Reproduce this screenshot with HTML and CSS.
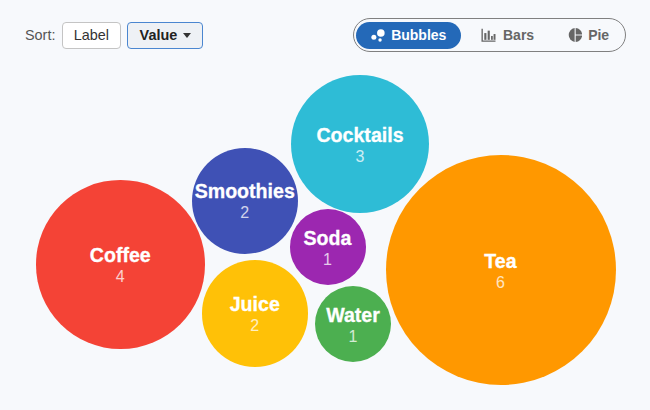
FILE: index.html
```html
<!DOCTYPE html>
<html lang="en">
<head>
<meta charset="utf-8">
<title>Drinks</title>
<link rel="stylesheet" href="styles.css">
</head>
<body>
<div class="toolbar">
  <div class="sort">
    <span class="sort-label">Sort:</span>
    <button class="btn btn-label">Label</button>
    <button class="btn btn-active">Value <span class="caret"></span></button>
  </div>
  <div class="views">
    <div class="view view-on">
      <svg class="icon" viewBox="0 0 14 14"><circle cx="2.6" cy="9.2" r="2.5"/><circle cx="9.6" cy="5" r="3.8"/><circle cx="8.8" cy="12" r="1.7"/></svg>
      Bubbles
    </div>
    <div class="view view-bars">
      <svg class="icon" viewBox="0 0 15 14"><path d="M0.5 0.5h1.4v12.2H15V14H0.5z"/><rect x="3.4" y="5" width="2.2" height="7"/><rect x="6.9" y="2.5" width="2.2" height="9.5"/><rect x="10.4" y="8" width="1.8" height="4"/><rect x="13" y="6" width="2" height="6"/></svg>
      Bars
    </div>
    <div class="view view-pie">
      <svg class="icon" viewBox="0 0 15 15"><path d="M6.8 0.1v14.8A7.5 7.5 0 0 1 6.8 .1z"/><path d="M8 .1A7.5 7.5 0 0 1 14.9 6.9H8z"/><path d="M8 8.1h6.9A7.5 7.5 0 0 1 8 14.9z"/></svg>
      Pie
    </div>
  </div>
</div>
<div class="chart">
  <div class="bubble coffee"><b>Coffee</b><span>4</span></div>
  <div class="bubble tea"><b>Tea</b><span>6</span></div>
  <div class="bubble cocktails"><b>Cocktails</b><span>3</span></div>
  <div class="bubble smoothies"><b>Smoothies</b><span>2</span></div>
  <div class="bubble juice"><b>Juice</b><span>2</span></div>
  <div class="bubble soda"><b>Soda</b><span>1</span></div>
  <div class="bubble water"><b>Water</b><span>1</span></div>
</div>
</body>
</html>
```
FILE: styles.css
```css
* { box-sizing: border-box; }
html, body { margin: 0; height: 100%; }
body {
  width: 650px;
  height: 410px;
  overflow: hidden;
  background: #f7f9fc;
  font-family: "Liberation Sans", Arial, sans-serif;
  position: relative;
}
.toolbar {
  display: flex;
  justify-content: space-between;
  align-items: center;
  padding: 18px 24px 0 25px;
}
.sort { display: flex; align-items: center; gap: 6.5px; }
.sort-label { font-size: 14.4px; color: #555; }
.btn {
  height: 27px;
  padding: 0;
  font: 14.4px "Liberation Sans", Arial, sans-serif;
  color: #333;
  background: #fff;
  border: 1px solid #c4c4c4;
  border-radius: 4px;
}
.btn-label { width: 59px; }
.btn-active {
  width: 76px;
  font-weight: bold;
  color: #222;
  background: #eef1f5;
  border-color: #4a86d0;
}
.caret {
  display: inline-block;
  width: 0;
  height: 0;
  margin-left: 2px;
  vertical-align: 2px;
  border-left: 4px solid transparent;
  border-right: 4px solid transparent;
  border-top: 5px solid #333;
}
.views {
  display: flex;
  align-items: center;
  width: 273px;
  height: 34px;
  padding: 2px;
  border: 1px solid #808080;
  border-radius: 17px;
}
.view {
  display: flex;
  align-items: center;
  justify-content: center;
  gap: 6px;
  height: 27px;
  padding: 0 10px;
  border-radius: 14px;
  font-size: 14px;
  font-weight: bold;
  color: #666;
}
.view-bars { margin-left: 10px; gap: 7.5px; }
.view-pie { margin-left: 13.5px; }
.view-on { width: 105px; background: #2469b8; color: #fff; }
.icon { width: 14.5px; height: 14px; fill: currentColor; }
.chart { position: absolute; inset: 0; }
.bubble {
  position: absolute;
  display: flex;
  flex-direction: column;
  align-items: center;
  justify-content: center;
  padding-top: 1px;
  border-radius: 50%;
  color: #fff;
  white-space: nowrap;
}
.bubble b { font-size: 19.6px; line-height: 23px; -webkit-text-stroke: 0.3px #fff; }
.bubble span { font-size: 16px; line-height: 19px; opacity: .75; }
.coffee { left: 36px; top: 180px; width: 168.5px; height: 168.5px; background: #f44336; }
.tea { left: 385.5px; top: 155px; width: 230px; height: 230px; background: #ff9800; }
.cocktails { left: 291px; top: 75px; width: 138px; height: 138px; background: #2ebcd6; }
.smoothies { left: 191.5px; top: 147.5px; width: 106.5px; height: 106.5px; background: #3f51b5; }
.juice { left: 201.5px; top: 260px; width: 106.5px; height: 106.5px; background: #ffc107; }
.soda { left: 289.5px; top: 209px; width: 76px; height: 76px; background: #9c27b0; }
.water { left: 315px; top: 286px; width: 76px; height: 76px; background: #4caf50; }
```
